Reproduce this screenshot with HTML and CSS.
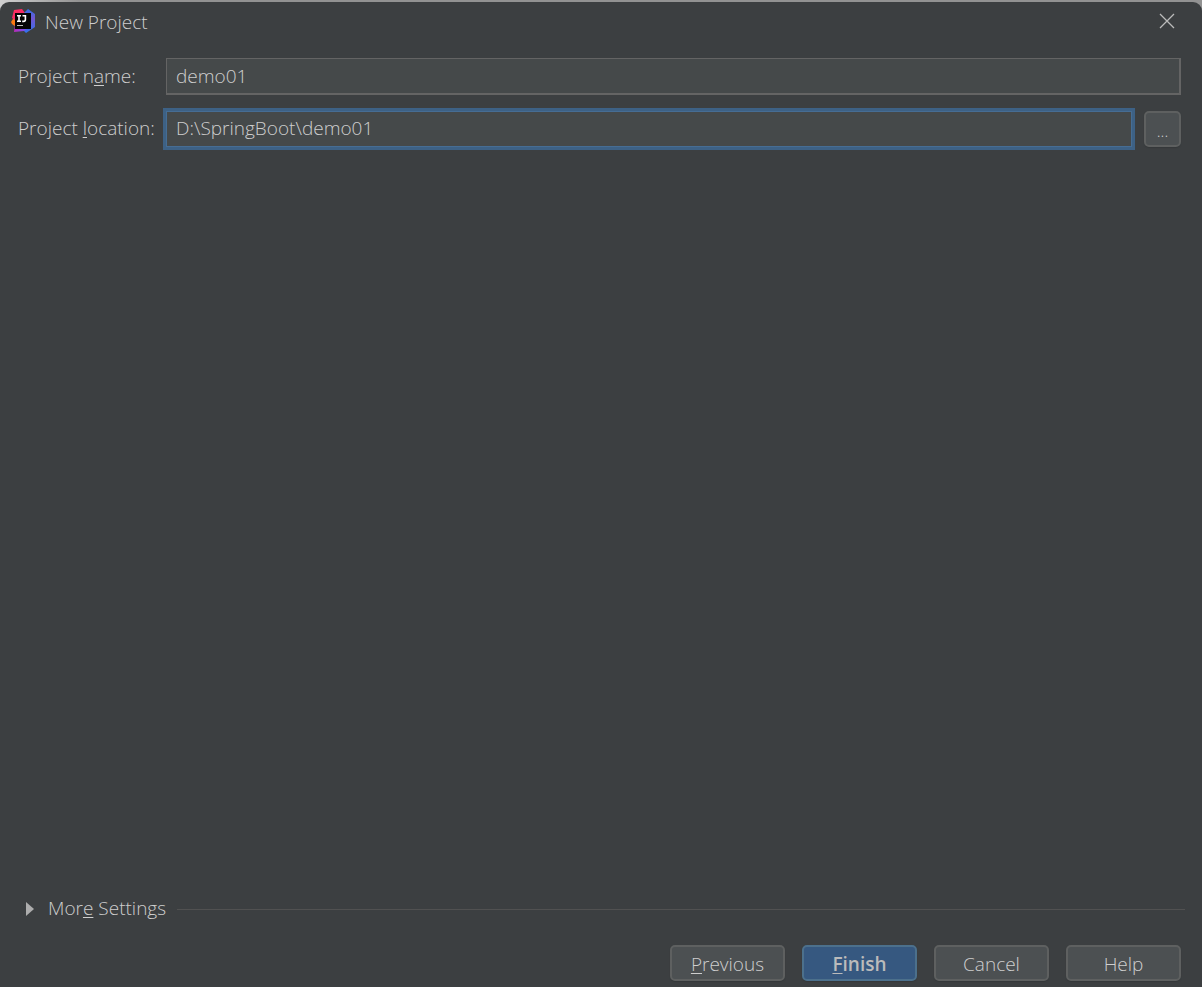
FILE: index.html
```html
<!DOCTYPE html>
<html lang="en">
<head>
<meta charset="utf-8">
<title>New Project</title>
<link rel="stylesheet" href="styles.css">
</head>
<body>
<main class="dialog">
  <header class="titlebar">
    <svg class="logo" viewBox="0 0 24 24" aria-hidden="true">
      <defs>
        <linearGradient id="pink" x1="0" y1="0" x2="1" y2="1"><stop offset="0" stop-color="#fe315d"/><stop offset="1" stop-color="#f0246f"/></linearGradient>
        <linearGradient id="blue" x1="0" y1="0" x2="0" y2="1"><stop offset="0" stop-color="#2f6fe8"/><stop offset=".4" stop-color="#7356cf"/><stop offset="1" stop-color="#2e72f0"/></linearGradient>
        <linearGradient id="purple" x1="0" y1="0" x2="1" y2="0"><stop offset="0" stop-color="#b92bb5"/><stop offset="1" stop-color="#6b57ff"/></linearGradient>
      </defs>
      <path fill="#f97a12" d="M0 13 2 10 5 9V18L1 15Z"/>
      <path fill="url(#pink)" d="M3 1 11 0 14 4 5 12 1 9Z"/>
      <path fill="url(#blue)" d="M13 4 17 0 24 5V18L15 24 11 20 18 15Z"/>
      <path fill="url(#purple)" d="M4 15 8 19 16 20 13 22 3 23Z"/>
      <path fill="#050505" d="M4 4H20V20H4Z"/>
      <path fill="none" stroke="#fff" stroke-width="1.6" d="M6 6.8H10M8 6.8V12.2M6 12.2H10M11.5 6.8H14.4V10.5Q14.4 12.4 12.6 12.4H11.2"/>
      <path fill="#bbb" d="M6 16H12V17H6Z"/>
    </svg>
    <h1 class="title">New Project</h1>
    <button class="close" type="button" aria-label="Close">
      <svg class="close-icon" viewBox="0 0 16 16" aria-hidden="true"><path d="M1 1 15 15M15 1 1 15"/></svg>
    </button>
  </header>
  <form class="content">
    <div class="fields">
      <label class="label" for="name">Project n<u>a</u>me:</label>
      <input class="field" id="name" type="text" value="demo01">
      <label class="label" for="location">Project <u>l</u>ocation:</label>
      <div class="location">
        <input class="field active" id="location" type="text" value="D:\SpringBoot\demo01">
        <button class="button browse" type="button" aria-label="Browse">...</button>
      </div>
    </div>
    <div class="more">
      <button class="toggle" type="button" aria-expanded="false">
        <svg class="arrow" viewBox="0 0 8 14" aria-hidden="true"><path d="M0 0 8 7 0 14Z"/></svg>
        <span class="label">Mor<u>e</u> Settings</span>
      </button>
      <span class="rule"></span>
    </div>
    <footer class="actions">
      <button class="button" type="button"><span><u>P</u>revious</span></button>
      <button class="button primary" type="submit"><span><u>F</u>inish</span></button>
      <button class="button" type="button">Cancel</button>
      <button class="button" type="button">Help</button>
    </footer>
  </form>
</main>
</body>
</html>
```
FILE: styles.css
```css
* { box-sizing: border-box; }

body {
  margin: 0;
  padding-top: 2px;
  min-height: 100vh;
  display: flex;
  background: linear-gradient(90deg, #d0d0d0, #929292 80px);
  color: #cecece;
  font: 300 19px/26px "Open Sans", "Noto Sans", sans-serif;
}

button, input { font: inherit; color: inherit; }

u {
  text-decoration-thickness: 1px;
  text-underline-offset: 2px;
  text-decoration-skip-ink: none;
}

.dialog {
  flex: 1;
  display: flex;
  flex-direction: column;
  background: #3c3f41;
  border-radius: 9px 9px 0 0;
}

.titlebar {
  display: flex;
  align-items: center;
  height: 38px;
  padding: 0 24px 0 11px;
}

.logo { width: 24px; height: 24px; margin-right: 10px; }

.title { margin: 0; padding-top: 2px; flex: 1; font-size: 19px; font-weight: inherit; }

.close { display: flex; padding: 3px; border: 0; background: none; }

.close-icon { width: 16px; height: 16px; fill: none; stroke: #bbbbbb; stroke-width: 1.3; }

.content {
  flex: 1;
  display: flex;
  flex-direction: column;
  padding: 18px 21px 6px 18px;
}

.fields {
  display: grid;
  grid-template-columns: 138px 1fr;
  align-items: center;
  gap: 16px 10px;
  white-space: nowrap;
}

.label { padding-bottom: 2px; }

.field {
  min-width: 0;
  width: 100%;
  height: 37px;
  padding: 0 9px;
  background: #45494a;
  border: 2px solid #646464;
  border-width: 1px 2px 2px 1px;
  outline: 0;
}

.field.active {
  flex: 1;
  height: 36px;
  padding-bottom: 2px;
  border: 1px solid #466d94;
  box-shadow: 0 0 0 3px #3d6185;
}

.location { display: flex; gap: 12px; }

.button {
  width: 115px;
  height: 36px;
  padding: 1px 0 0;
  background: #4c5052;
  border: 2px solid #5e6060;
  border-radius: 5px;
  box-shadow: 0 1px 1px #35383a;
}

.browse { width: 37px; padding-top: 4px; font-size: 16px; }

.primary { color: #bbbbbb; background: #365880; border-color: #4c708c; font-weight: 600; }

.more { display: flex; align-items: center; gap: 11px; margin: auto -4px 22px 8px; }

.toggle {
  display: flex;
  align-items: center;
  gap: 14px;
  padding: 0;
  border: 0;
  background: none;
}

.arrow { width: 8px; height: 14px; fill: #adadad; }

.rule { flex: 1; height: 1px; background: #515151; }

.actions { display: flex; justify-content: flex-end; gap: 17px; }
```
